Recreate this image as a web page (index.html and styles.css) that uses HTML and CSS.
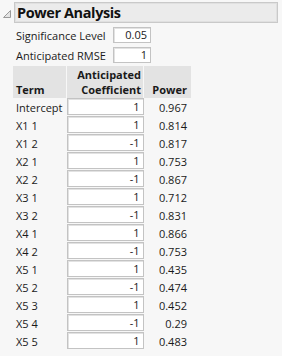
FILE: index.html
```html
<!DOCTYPE html>
<html lang="en">
<head>
  <meta charset="UTF-8">
  <title>Power Analysis</title>
  <link rel="stylesheet" href="styles.css">
</head>
<body>
  <div class="outline">
    <svg class="disclosure" width="10" height="10" viewBox="0 0 10 10">
      <polygon points="1.5,8.5 8.5,1.5 8.5,8.5" fill="#e4e4e4" stroke="#9a9a9a" stroke-width="1"/>
    </svg>
    <div class="title-box">Power Analysis</div>
  </div>

  <div class="params">
    <span class="label">Significance Level</span>
    <span class="box">0.05</span>
    <span class="label">Anticipated RMSE</span>
    <span class="box">1</span>
  </div>

  <table class="power-table">
    <thead>
      <tr>
        <th class="term">Term</th>
        <th class="coef">Anticipated<br>Coefficient</th>
        <th class="power">Power</th>
      </tr>
    </thead>
    <tbody id="rows"></tbody>
  </table>

  <script>
    const rows = [
      ["Intercept", 1, "0.967"],
      ["X1 1", 1, "0.814"],
      ["X1 2", -1, "0.817"],
      ["X2 1", 1, "0.753"],
      ["X2 2", -1, "0.867"],
      ["X3 1", 1, "0.712"],
      ["X3 2", -1, "0.831"],
      ["X4 1", 1, "0.866"],
      ["X4 2", -1, "0.753"],
      ["X5 1", 1, "0.435"],
      ["X5 2", -1, "0.474"],
      ["X5 3", 1, "0.452"],
      ["X5 4", -1, "0.29"],
      ["X5 5", 1, "0.483"]
    ];
    const body = document.getElementById("rows");
    body.innerHTML = rows.map(r => `
      <tr>
        <td class="term">${r[0]}</td>
        <td class="coef"><span class="box">${r[1]}</span></td>
        <td class="power">${r[2]}</td>
      </tr>`).join("");
  </script>
</body>
</html>
```

FILE: styles.css
```css
body {
  margin: 0;
  background: #f7f7f7;
  font-family: 'Open Sans', sans-serif;
  font-size: 11px;
  color: #1a1a1a;
}

.outline {
  display: flex;
  align-items: center;
  padding: 2px 4px 0 2px;
}

.disclosure {
  margin-top: 3px;
  margin-right: 2px;
}

.title-box {
  flex: 1;
  height: 19px;
  line-height: 19px;
  padding-left: 2px;
  background: #ebebeb;
  border: 1px solid #c9c9c9;
  box-shadow: inset 0 0 0 1px #e0e0e0;
  font-weight: bold;
  font-size: 14.5px;
  letter-spacing: -0.4px;
  color: #111;
}

.params {
  display: grid;
  grid-template-columns: 93px 38px;
  column-gap: 4px;
  row-gap: 4px;
  align-items: center;
  padding: 4px 0 0 16px;
}

.box {
  display: block;
  box-sizing: border-box;
  height: 16px;
  line-height: 14px;
  padding-right: 3px;
  text-align: right;
  background: #fff;
  border: 1px solid #c3c3c3;
  box-shadow: inset 1px 1px 0 #e2e2e2;
}

.power-table {
  margin: 3px 0 0 13px;
  border-collapse: collapse;
}

.power-table th {
  background: #e3e3e3;
  border-right: 1px solid #f7f7f7;
  font-weight: bold;
  line-height: 15px;
  padding: 1px 2px 1px 3px;
  vertical-align: bottom;
  text-align: right;
}

.power-table th.term {
  width: 48px;
  text-align: left;
}

.power-table th.coef {
  width: 71px;
}

.power-table th.power {
  width: 40px;
  border-right: none;
  padding-right: 4px;
}

.power-table td {
  height: 18px;
  padding: 0;
}

.power-table td.term {
  padding-left: 3px;
}

.power-table td.coef .box {
  height: 17px;
  line-height: 15px;
  margin-bottom: 1px;
}

.power-table td.power {
  text-align: right;
  padding-right: 4px;
}
```
